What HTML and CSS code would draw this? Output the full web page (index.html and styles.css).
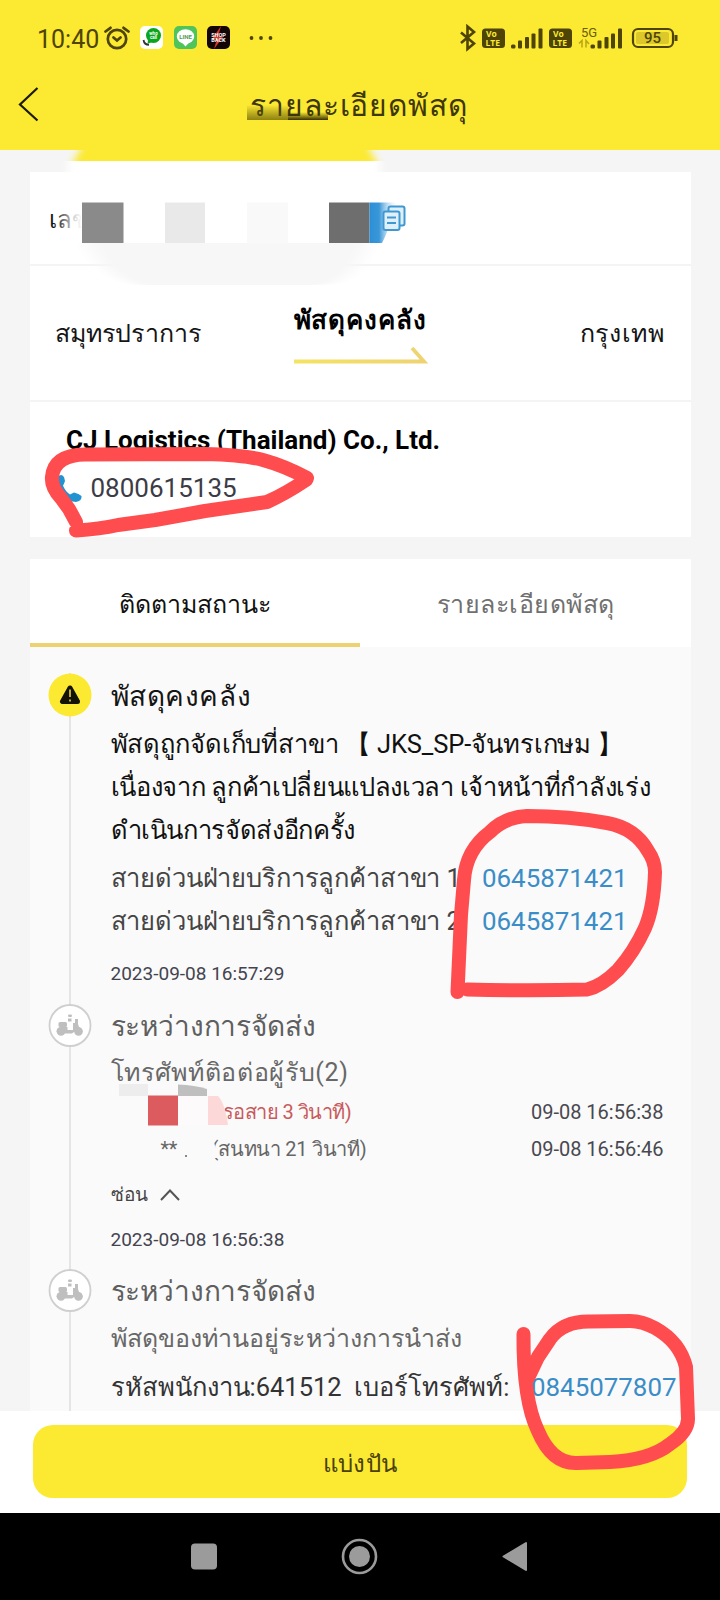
FILE: index.html
```html
<!DOCTYPE html>
<html lang="th">
<head>
<meta charset="utf-8">
<title>รายละเอียดพัสดุ</title>
<link rel="stylesheet" href="styles.css">
</head>
<body>
<div class="screen">
  <header class="top">
    <div class="status">
      <span class="clock">10:40</span>
      <svg class="alarm" width="26" height="24" viewBox="0 0 26 24" fill="none" stroke="#4d4405" stroke-width="2.700" stroke-linecap="round"><circle cx="13" cy="13" r="9.2"/><path d="M1.5 5.5 6.5 1.8M24.500 5.500 19.500 1.800M9.500 11.500 13 14.500 16.500 11.500"/></svg>
      <svg class="app" width="23" height="23" viewBox="0 0 23 23"><rect width="23" height="23" rx="5" fill="#fff"/><circle cx="13.500" cy="9.500" r="7.500" fill="#0aa51d"/><path d="M8 14 7.500 18 12 16z" fill="#0aa51d"/><path d="M3.500 14c.5 3 2.500 4.800 5.500 4.800" fill="none" stroke="#333" stroke-width="1.800"/><text x="13.500" y="8.800" class="micro">who</text><text x="13.500" y="13" class="micro">call</text></svg>
      <svg class="app" width="23" height="23" viewBox="0 0 23 23"><rect width="23" height="23" rx="5" fill="#4fc45b"/><ellipse cx="11.500" cy="10.500" rx="8.700" ry="7.300" fill="#fff"/><path d="M8 16.500 11.500 20.500 15.500 16z" fill="#fff"/><text x="11.500" y="12.600" class="micro line">LINE</text></svg>
      <svg class="app" width="23" height="23" viewBox="0 0 23 23"><rect width="23" height="23" rx="5" fill="#120606"/><path d="M14 0 5 13h5L7 23l9-12h-5z" fill="#d8372c"/><text x="11.500" y="10.500" class="micro shop">SHOP</text><text x="11.500" y="16" class="micro shop">BACK</text></svg>
      <svg class="dots" width="24" height="6" viewBox="0 0 24 6" fill="#4d4405"><circle cx="2.500" cy="3" r="1.900"/><circle cx="12" cy="3" r="1.900"/><circle cx="21.500" cy="3" r="1.900"/></svg>
      <svg class="radio" width="220" height="28" viewBox="0 0 220 28">
        <path d="M2 8.500 15 19.500 8.500 25V2.500L15 8 2 19" fill="none" stroke="#4d4405" stroke-width="2.600"/>
        <g id="volte"><rect x="23" y="4.500" width="23" height="19.500" rx="3.500" fill="#4d4405"/><text x="27" y="12.500" class="vo">Vo</text><text x="26.500" y="22" class="vo">LTE</text></g>
        <g id="bars" fill="#4d4405"><rect x="52" y="20.500" width="4.500" height="4" rx="1.500"/><rect x="59" y="16.500" width="4" height="8" rx="1"/><rect x="66" y="13" width="4" height="11.500" rx="1"/><rect x="72.500" y="9.500" width="4" height="15" rx="1"/><rect x="79.500" y="4.500" width="4" height="20" rx="1"/></g>
        <use href="#volte" x="67"/>
        <use href="#bars" x="79.500"/>
        <text x="122" y="12.600" class="net">5G</text>
        <path d="M120 19.500 123 16.500V23.500M127 23.500V16.500L130 20" fill="none" stroke="#b9a414" stroke-width="1.500"/>
        <rect x="174" y="5" width="40" height="18" rx="5" fill="none" stroke="#4d4405" stroke-width="2.200"/><rect x="177" y="8" width="33" height="12" rx="2" fill="#dcc82b"/><path d="M217 11v6" stroke="#4d4405" stroke-width="3"/><text x="193.500" y="19.300" class="pct">95</text>
      </svg>
    </div>
    <div class="bar">
      <svg class="back" width="22" height="36" viewBox="0 0 22 36" fill="none" stroke="#1c1a05" stroke-width="2.200"><path d="M19.500 2 2 18.500 19.500 34.500"/></svg>
      <h1>รายละเอียดพัสดุ</h1>
    </div>
  </header>

  <main>
    <section class="card">
      <div class="bill">เลข</div>
      <div class="route">
        <span class="from">สมุทรปราการ</span>
        <div class="state"><b>พัสดุคงคลัง</b>
          <svg width="136" height="18" viewBox="0 0 136 18"><defs><linearGradient id="ag" gradientUnits="userSpaceOnUse" x1="0" y1="0" x2="136" y2="0"><stop stop-color="#f3e463"/><stop offset="1" stop-color="#eed273"/></linearGradient></defs><path d="M0 14.500H130L118 1" fill="none" stroke="url(#ag)" stroke-width="3.800"/></svg>
        </div>
        <span class="to">กรุงเทพ</span>
      </div>
      <div class="carrier">
        <b>CJ Logistics (Thailand) Co., Ltd.</b>
        <div class="tel"><svg width="26" height="28" viewBox="0 0 26 28"><path d="M2 3Q5-1 8 3L9 7Q8 10 7 11.500 9 17 14 20.500L18 18.500Q23 19.500 25.500 22 26 27 20 28 13 28 7 21 1 13 2 3z" fill="#2292d0"/></svg>0800615135</div>
      </div>
    </section>

    <section class="card second">
      <nav class="tabs"><span class="tab on">ติดตามสถานะ</span><span class="tab off">รายละเอียดพัสดุ</span></nav>
      <div class="timeline">
        <article class="item first">
          <svg class="dot" width="44" height="44" viewBox="0 0 44 44"><circle cx="22" cy="22" r="21.500" fill="#fce932"/><path d="M22 15 14.500 28.500H29.500z" fill="#141204" stroke="#141204" stroke-width="5" stroke-linejoin="round"/><path d="M22 16.500v7.500M22 26.500v2" stroke="#d8c83a" stroke-width="1.700"/></svg>
          <div class="body">
            <h2>พัสดุคงคลัง</h2>
            <p class="desc"><span class="d1">พัสดุถูกจัดเก็บที่สาขา <em>【</em> JKS_SP-จันทรเกษม <em>】</em></span><br><span class="d2">เนื่องจาก ลูกค้าเปลี่ยนแปลงเวลา เจ้าหน้าที่กำลังเร่ง</span><br><span class="d3">ดำเนินการจัดส่งอีกครั้ง</span></p>
            <p class="hot"><span>สายด่วนฝ่ายบริการลูกค้าสาขา 1</span><a>0645871421</a></p>
            <p class="hot"><span>สายด่วนฝ่ายบริการลูกค้าสาขา 2</span><a>0645871421</a></p>
            <time>2023-09-08 16:57:29</time>
          </div>
        </article>
        <article class="item mid">
          <svg class="dot" width="44" height="44" viewBox="0 0 44 44"><g id="moto"><circle cx="22" cy="21.500" r="20.500" fill="#fff" stroke="#cfcfcf" stroke-width="1.800"/><g fill="#bfbfbf"><circle cx="13" cy="27.500" r="4.300"/><circle cx="30.500" cy="27.500" r="4.300"/><rect x="10.500" y="18" width="8.500" height="5" rx="1.500"/><path d="M8.500 28q0-5 5-5h6v3h5.500V19h2v-4h3v5l1 3q3.500 1 3.500 5H26l-2 1.500h-9z"/><rect x="20" y="10.500" width="4" height="2.500" rx="1.200"/><rect x="20" y="14.500" width="3.500" height="3"/></g></g></svg>
          <div class="body">
            <h2 class="g">ระหว่างการจัดส่ง</h2>
            <p class="sub call">โทรศัพท์ติอต่อผู้รับ(2)</p>
            <div class="log red"><span>รอสาย 3 วินาที)</span><span class="at">09-08 16:56:38</span></div>
            <div class="log"><span><small>**</small>(สนทนา 21 วินาที)</span><span class="at">09-08 16:56:46</span></div>
            <div class="fold">ซ่อน<svg width="20" height="12" viewBox="0 0 20 12" fill="none" stroke="#555" stroke-width="2"><path d="M1 11 10 1.500 19 11"/></svg></div>
            <time>2023-09-08 16:56:38</time>
          </div>
        </article>
        <article class="item last">
          <svg class="dot" width="44" height="44" viewBox="0 0 44 44"><use href="#moto"/></svg>
          <div class="body">
            <h2 class="g">ระหว่างการจัดส่ง</h2>
            <p class="sub way">พัสดุของท่านอยู่ระหว่างการนำส่ง</p>
            <p class="staff"><span>รหัสพนักงาน:641512&nbsp; เบอร์โทรศัพท์:</span><a>0845077807</a></p>
          </div>
        </article>
      </div>
    </section>
  </main>

  <footer><button>แบ่งปัน</button></footer>
  <div class="sys">
    <svg width="720" height="87" viewBox="0 0 720 87"><rect x="191" y="30.500" width="26" height="26" rx="4" fill="#9b9b9b"/><circle cx="359.500" cy="43.500" r="16.500" fill="none" stroke="#9b9b9b" stroke-width="2.600"/><circle cx="359.500" cy="43.500" r="10.500" fill="#9b9b9b"/><path d="M503.500 43.500 526 30V57z" fill="#9b9b9b" stroke="#9b9b9b" stroke-width="2" stroke-linejoin="round"/></svg>
  </div>

  <!-- blurred-out personal data and hand-drawn markings -->
  <svg class="marks" width="720" height="1600" viewBox="0 0 720 1600">
    <defs>
      <linearGradient id="fade" x1="0" y1="0" x2="0" y2="1"><stop stop-color="#514900" stop-opacity="0"/><stop offset="1" stop-color="#6b6008" stop-opacity=".75"/></linearGradient>
      <linearGradient id="fade2" x1="0" y1="0" x2="0" y2="1"><stop stop-color="#413a00" stop-opacity="0"/><stop offset="1" stop-color="#352f00"/></linearGradient>
      <linearGradient id="blue" x1="0" y1="0" x2="1" y2="0"><stop stop-color="#2b8fd6"/><stop offset=".35" stop-color="#3a97d8"/><stop offset="1" stop-color="#cfe7f7" stop-opacity="0"/></linearGradient>
      <linearGradient id="edge" x1="0" y1="0" x2="1" y2="0"><stop stop-color="#fff" stop-opacity="0"/><stop offset=".7" stop-color="#fff" stop-opacity=".8"/><stop offset="1" stop-color="#fff"/></linearGradient>
      <filter id="soft" x="-10%" y="-50%" width="120%" height="200%"><feGaussianBlur stdDeviation="4 0"/></filter>
      <filter id="haze" x="-10%" y="0" width="120%" height="100%"><feGaussianBlur stdDeviation="9 0"/></filter>
    </defs>
    <rect x="247" y="105" width="41" height="15" fill="url(#fade)"/><rect x="288" y="112" width="40" height="8" fill="url(#fade2)"/>
    <path d="M80 150H370L376 161H74z" fill="#fce932" filter="url(#soft)"/>
    <rect x="68" y="161" width="312" height="11" fill="#fff" filter="url(#soft)"/>
    <path d="M88 243H368Q352 285 318 285H140Q102 276 88 243z" fill="#f7f7f7" filter="url(#haze)"/>
    <rect x="54" y="203" width="28" height="34" fill="url(#edge)"/>
    <rect x="82" y="202.500" width="41.500" height="40.500" fill="#8a8a8a"/><rect x="165" y="202.500" width="40" height="40.500" fill="#e9e9e9"/><rect x="247" y="202.500" width="41" height="40.500" fill="#f9f9f9"/><rect x="329" y="202.500" width="40.500" height="40.500" fill="#6e6e6e"/>
    <path d="M369.500 202.500H397Q388 232 382 243H369.500z" fill="url(#blue)"/>
    <g fill="#dff0fb" stroke="#3f98d2" stroke-width="2"><rect x="388.500" y="206.500" width="16" height="19" rx="2"/><rect x="383.500" y="211.500" width="16" height="18.500" rx="2"/><path d="M387 217.500h9M387 223h9"/></g>
    <rect x="119" y="1084" width="29" height="12" fill="#ededed"/><path d="M178 1084.500Q195 1085 207 1089V1096H178z" fill="#bfbfbf"/><rect x="119" y="1096" width="29" height="29" fill="#fafafa"/><rect x="148" y="1095.500" width="30" height="30" fill="#dc5b5f"/><rect x="178" y="1096" width="30" height="29" fill="#fcfafa"/><path d="M208 1096h10q7 7 10 29h-20z" fill="#fdd8d9"/>
    <path d="M177 1150h8v8h-8zM212 1136l5 16 1 6h-6z" fill="#fafafa"/><rect x="185" y="1155" width="2" height="2" fill="#888"/>
    <g fill="none" stroke="#ff4c4f" stroke-width="14" stroke-linecap="round" stroke-linejoin="round">
      <path d="M76 530.500Q100 529 118 525L155 520 205 511 267 502Q285 494 306 480L307 478Q285 466 263 460 245 455 205 454L85 454.500Q54 455 52 477 51 487 61 498L69 509 76 522"/>
      <path d="M457.500 992 461 915 464 880Q466 850 490 832 505 817 527 816 570 816 607 823 635 828 648 851 655 861 655 872 654 907 645 928 634 952 618 970 602 986 587 989.500 530 991 467 989.500"/>
      <path d="M523.500 1334Q523 1400 538 1431 552 1464 577 1463L610 1462Q650 1460 670 1444 688 1432 688 1419L686 1367Q680 1342 655 1328 642 1321 630 1321L590 1321.500Q563 1321 550 1339L538 1357 528 1378"/>
    </g>
  </svg>
</div>
</body>
</html>
```
FILE: styles.css
```css
* { box-sizing: border-box; }
body { margin: 0; font-family: Roboto, "Liberation Sans", sans-serif; color: #151515; }
h1, h2, p { margin: 0; font-weight: 400; }
svg { display: block; flex: none; }
em { font-style: normal; }
.screen { position: relative; width: 720px; height: 1600px; display: flex; flex-direction: column; background: #f5f5f5; overflow: hidden; white-space: nowrap; }
.top { height: 150px; background: #fce932; }
.status { height: 75px; display: flex; align-items: center; padding-left: 37px; color: #4d4405; }
.clock { width: 67px; font-size: 25px; line-height: 30px; padding-top: 4px; }
.app { margin-left: 10.500px; }
.alarm + .app { margin-left: 10px; }
.dots { margin-left: 19px; }
.radio { margin-left: auto; margin-right: 41px; }
.micro { font: 700 4.500px Roboto, sans-serif; fill: #fff; text-anchor: middle; }
.micro.line { font-size: 6px; fill: #4fa055; }
.micro.shop { font-size: 5.500px; }
.vo { font: 700 8.500px "Open Sans", sans-serif; fill: #fce932; }
.net { font: 13px Roboto, sans-serif; fill: #6a5e0b; }
.pct { font: 500 15px Roboto, sans-serif; fill: #4d4405; text-anchor: middle; }
.bar { height: 75px; display: grid; grid-template-columns: 1fr auto 1fr; align-items: center; padding: 0 20px 13px 18px; }
.back { margin-top: -4px; }
.bar h1 { font-size: 30px; letter-spacing: .85px; line-height: 50px; color: #3d370a; }
main { height: 1261px; padding: 22px 29px 0 29.500px; }
.card { background: #fff; height: 365px; }
.bill { height: 94px; line-height: 96px; padding-left: 19px; font-size: 24px; border-bottom: 2px solid #f4f4f4; }
.route { height: 136px; display: grid; grid-template-columns: 238px 1fr auto; align-items: center; padding: 0 27px 0 26px; font-size: 25px; border-bottom: 2px solid #f4f4f4; }
.from { margin-left: -1px; letter-spacing: .2px; }
.to { letter-spacing: .6px; margin-right: -.5px; }
.state { display: flex; flex-direction: column; gap: 9px; line-height: 36px; color: #000; }
.state b { font-size: 26px; letter-spacing: .9px; }
.carrier { padding: 18px 0 0 36.500px; font-size: 26px; color: #000; }
.carrier b { display: block; line-height: 40px; font-size: 26px; }
.tel { display: flex; align-items: center; gap: 7.500px; margin-left: -9px; line-height: 56px; color: #3c3c46; }
.tel svg { margin: 0 1px 0 -1px; }
.second { height: 852px; margin-top: 22px; background: #fafafa; }
.tabs { display: grid; grid-template-columns: 1fr 1fr; height: 88px; background: #fff; }
.tab { text-align: center; line-height: 92px; height: 88px; font-size: 25px; color: #707070; }
.tab.on { color: #111; border-bottom: 4px solid #edd272; }
.tab.off { letter-spacing: .5px; }
.timeline { padding: 26px 27.500px 0 18px; }
.item { position: relative; display: flex; gap: 19px; }
.item::before { content: ""; position: absolute; left: 21px; top: 0; bottom: 0; width: 2px; background: #e5e5e5; }
.dot { position: relative; }
.first { height: 331px; }
.mid { height: 265px; }
.last { height: 142px; }
.body { flex: 1; }
h2 { font-size: 28px; line-height: 47px; letter-spacing: .6px; }
h2.g { line-height: 46px; letter-spacing: -.15px; color: #5f5f5f; }
.desc { margin-top: 3px; font-size: 25.500px; line-height: 43px; color: #111; }
.d1 { letter-spacing: -.12px; }
.d2 { letter-spacing: -.33px; }
.d3 { letter-spacing: -.35px; }
.hot { display: flex; font-size: 25.500px; line-height: 43px; color: #444; }
.desc + .hot { margin-top: 5px; }
.hot span { width: 371.500px; letter-spacing: -.15px; }
a { font-size: 25.900px; color: #3a8dc6; }
time { display: block; font-size: 19px; line-height: 30px; margin-top: 16px; color: #444450; }
.sub { font-size: 25px; line-height: 42px; color: #686868; }
.call { margin-top: 2px; letter-spacing: .68px; }
.way { letter-spacing: .08px; }
.log { display: flex; justify-content: space-between; font-size: 20px; line-height: 36px; padding-left: 112px; color: #666; letter-spacing: -.28px; }
.log + .log { padding-left: 50px; margin-top: 1px; }
.log small { display: inline-block; width: 51px; font-size: 20px; }
.red { color: #c95a5c; margin-top: 0; letter-spacing: -.5px; }
.at { color: #484850; letter-spacing: 0; }
.fold { display: flex; align-items: center; gap: 12px; margin-top: 13px; font-size: 19px; line-height: 30px; color: #444; }
.mid time { margin-top: 15px; }
.last .sub { margin-top: 3px; }
.staff { display: flex; font-size: 25.500px; line-height: 40px; margin-top: 7px; color: #333; }
.staff span { width: 420.500px; }
footer { height: 102px; background: #fff; padding: 14px 33px 0; }
button { display: block; width: 100%; height: 73px; padding: 3px 0 0; border: 0; border-radius: 20px; background: #fce932; color: #4a410a; font: 24px Roboto, "Liberation Sans", sans-serif; letter-spacing: .4px; }
.sys { height: 87px; background: #000; }
.marks { position: absolute; left: 0; top: 0; }
```
